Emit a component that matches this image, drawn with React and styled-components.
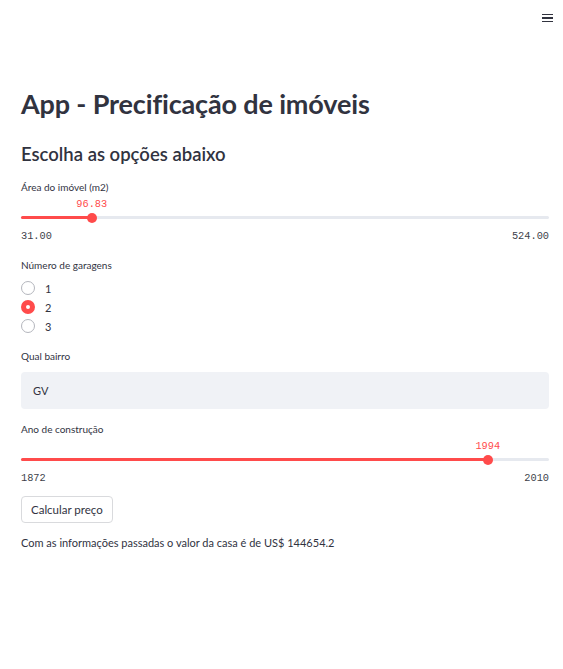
import styled, { createGlobalStyle } from "styled-components"

const GlobalStyle = createGlobalStyle`
  body {
    margin: 0;
    background: #fff;
    font-family: "Lato", "Noto Sans", sans-serif;
    color: #31333f;
  }
`

const RED = "#ff4b4b"

const Slider = ({ label, value, min, max, pct, space }) => (
  <Field $space={space}>
    <Label>{label}</Label>
    <SliderBox>
      <ValueRow>
        <ThumbValue style={{ left: `${pct}%` }}>{value}</ThumbValue>
      </ValueRow>
      <Track>
        <Fill style={{ width: `${pct}%` }} />
        <Thumb style={{ left: `${pct}%` }} />
      </Track>
      <Ticks>
        <span>{min}</span>
        <span>{max}</span>
      </Ticks>
    </SliderBox>
  </Field>
)

const App = () => {
  return (
    <>
      <GlobalStyle />
      <Header>
        <Menu aria-label="menu">
          <span />
          <span />
          <span />
        </Menu>
      </Header>
      <Main>
        <Title>App - Precificação de imóveis</Title>
        <Subtitle>Escolha as opções abaixo</Subtitle>
        <Slider label="Área do imóvel (m2)" value="96.83" min="31.00" max="524.00" pct={13.4} />
        <Field>
          <Label>Número de garagens</Label>
          <RadioGroup>
            {["1", "2", "3"].map((o) => (
              <RadioRow key={o}>
                <Radio $checked={o === "2"} />
                {o}
              </RadioRow>
            ))}
          </RadioGroup>
        </Field>
        <Field>
          <Label>Qual bairro</Label>
          <Select>GV</Select>
        </Field>
        <Slider label="Ano de construção" value="1994" min="1872" max="2010" pct={88.4} space={13} />
        <Button>Calcular preço</Button>
        <Result>Com as informações passadas o valor da casa é de US$ 144654.2</Result>
      </Main>
    </>
  )
}

const Header = styled.header`
  height: 36px;
  display: flex;
  justify-content: flex-end;
  align-items: center;
  padding-right: 10px;
`

const Menu = styled.div`
  width: 11px;
  display: flex;
  flex-direction: column;
  gap: 2px;
  span {
    display: block;
    height: 1.3px;
    background: #31333f;
  }
`

const Main = styled.main`
  padding: 46px 14px 0 21px;
  display: flex;
  flex-direction: column;
`

const Title = styled.h1`
  margin: 0;
  font-size: 27px;
  font-weight: 700;
  line-height: 44px;
  letter-spacing: -0.15px;
`

const Subtitle = styled.h2`
  margin: 18px 0 0;
  font-size: 18.5px;
  font-weight: 600;
  line-height: 20px;
`

const Field = styled.div`
  display: flex;
  flex-direction: column;
  margin-top: ${({ $space = 16 }) => $space}px;
`

const Label = styled.label`
  font-size: 10px;
  line-height: 14px;
  color: #31333f;
`

const SliderBox = styled.div`
  display: flex;
  flex-direction: column;
`

const ValueRow = styled.div`
  position: relative;
  height: 18px;
  margin-top: 4px;
`

const ThumbValue = styled.span`
  position: absolute;
  bottom: 6px;
  transform: translateX(-50%);
  font-family: "Liberation Mono", monospace;
  font-size: 10.3px;
  line-height: 12px;
  color: ${RED};
`

const Track = styled.div`
  position: relative;
  height: 3px;
  border-radius: 2px;
  background: #e6e9ef;
`

const Fill = styled.div`
  height: 100%;
  border-radius: 2px;
  background: ${RED};
`

const Thumb = styled.div`
  position: absolute;
  top: 50%;
  width: 10px;
  height: 10px;
  border-radius: 50%;
  background: ${RED};
  transform: translate(-50%, -50%);
`

const Ticks = styled.div`
  display: flex;
  justify-content: space-between;
  margin-top: 11px;
  font-family: "Liberation Mono", monospace;
  font-size: 10.3px;
  line-height: 12px;
  color: #3d3f4a;
`

const RadioGroup = styled.div`
  display: flex;
  flex-direction: column;
  gap: 5px;
  margin-top: 9px;
`

const RadioRow = styled.div`
  display: flex;
  align-items: center;
  gap: 10px;
  font-size: 11px;
  height: 14px;
`

const Radio = styled.span`
  width: 14px;
  height: 14px;
  box-sizing: border-box;
  border-radius: 50%;
  border: ${({ $checked }) => ($checked ? `5px solid ${RED}` : "1.5px solid #b4b6bd")};
  background: #fff;
`

const Select = styled.div`
  margin-top: 9px;
  height: 37px;
  display: flex;
  align-items: center;
  padding-left: 12px;
  border-radius: 4px;
  background: #f0f2f6;
  font-size: 11px;
`

const Button = styled.button`
  align-self: flex-start;
  margin-top: 12px;
  height: 27px;
  padding: 0 9px;
  border: 1px solid #d9dadd;
  border-radius: 4px;
  background: #fff;
  font-family: inherit;
  font-size: 11.5px;
  color: #31333f;
`

const Result = styled.p`
  margin: 12px 0 0;
  font-size: 11px;
  line-height: 16px;
`

export default App
